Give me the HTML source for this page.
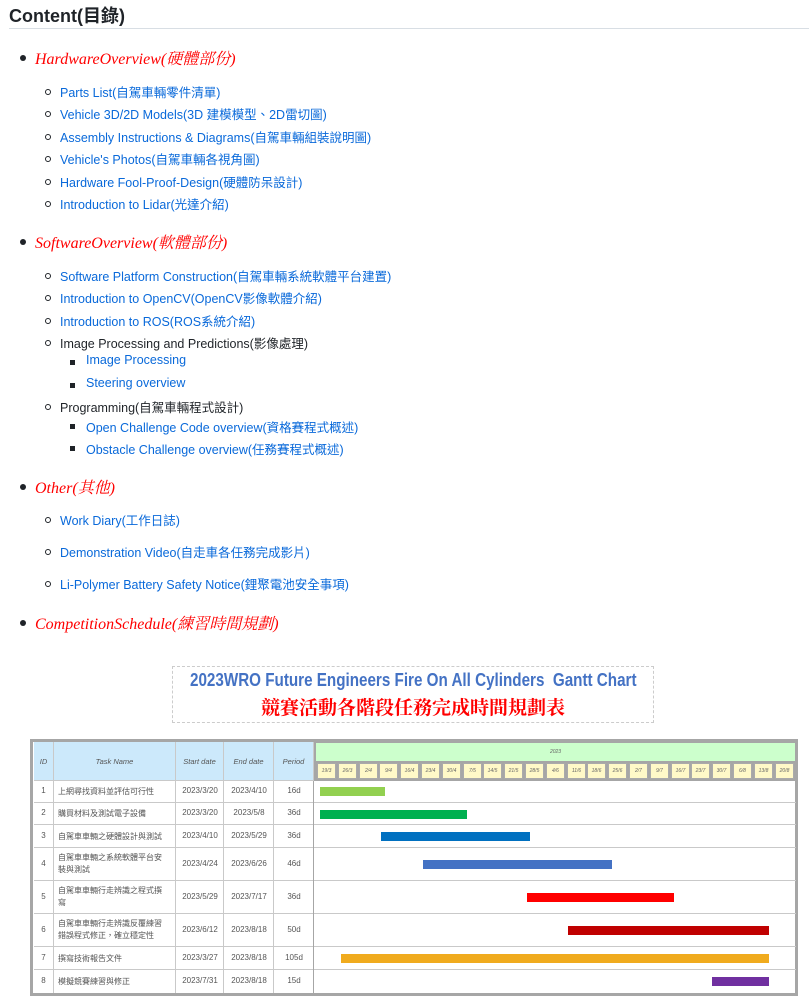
<!DOCTYPE html>
<html><head><meta charset="utf-8"><style>
*{margin:0;padding:0;box-sizing:border-box}
body{width:809px;height:1000px;background:#fff;position:relative;overflow:hidden;font-family:"Liberation Sans","Noto Sans CJK TC",sans-serif}
.a{position:absolute;white-space:nowrap}
h1{position:absolute;left:9px;top:2px;font-size:18px;font-weight:bold;color:#1f2328;font-family:"Liberation Sans","Noto Sans CJK TC",sans-serif}
.hr{position:absolute;left:9px;right:0;top:28px;height:1px;background:#d8dee4}
.m{font-family:"Liberation Serif","Noto Serif CJK SC",serif;font-style:italic;color:#f00;font-size:16px;left:35px}
.dot{position:absolute;width:6px;height:6px;border-radius:50%;background:#1f2328;left:20px}
.c{position:absolute;width:6px;height:6px;border-radius:50%;border:1px solid #1f2328;left:45px}
.s{position:absolute;width:5px;height:5px;background:#1f2328;left:70px}
.l{font-size:12.5px;color:#0969da;left:60px}
.k{font-size:12.5px;color:#1f2328;left:60px}
.l2{font-size:12.5px;color:#0969da;left:86px}
.cell{position:absolute;font-size:8px;color:#555;display:flex;align-items:center;justify-content:center;text-align:center;border-right:1px solid #c9c9c9}
.hd{font-style:italic;color:#555;font-size:7.5px}
.row{position:absolute;left:34px;width:762px;border-bottom:1px solid #c9c9c9}
.bar{position:absolute;height:9px}
.d{position:absolute;top:763px;width:19px;height:16px;background:#fff9c8;border:1px solid #aaa;font-size:5px;font-style:italic;color:#666;display:flex;align-items:center;justify-content:center}
</style></head><body>
<h1>Content(目錄)</h1><div class="hr"></div>

<div class="dot" style="top:55px"></div><div class="a m" style="top:46px">HardwareOverview(硬體部份)</div>
<div class="c" style="top:89px"></div><div class="a l" style="top:82px">Parts List(自駕車輛零件清單)</div>
<div class="c" style="top:111px"></div><div class="a l" style="top:104px">Vehicle 3D/2D Models(3D 建模模型、2D雷切圖)</div>
<div class="c" style="top:134px"></div><div class="a l" style="top:127px">Assembly Instructions &amp; Diagrams(自駕車輛組裝說明圖)</div>
<div class="c" style="top:156px"></div><div class="a l" style="top:149px">Vehicle's Photos(自駕車輛各視角圖)</div>
<div class="c" style="top:179px"></div><div class="a l" style="top:172px">Hardware Fool-Proof-Design(硬體防呆設計)</div>
<div class="c" style="top:201px"></div><div class="a l" style="top:194px">Introduction to Lidar(光達介紹)</div>

<div class="dot" style="top:239px"></div><div class="a m" style="top:230px">SoftwareOverview(軟體部份)</div>
<div class="c" style="top:273px"></div><div class="a l" style="top:266px">Software Platform Construction(自駕車輛系統軟體平台建置)</div>
<div class="c" style="top:295px"></div><div class="a l" style="top:288px">Introduction to OpenCV(OpenCV影像軟體介紹)</div>
<div class="c" style="top:318px"></div><div class="a l" style="top:311px">Introduction to ROS(ROS系統介紹)</div>
<div class="c" style="top:340px"></div><div class="a k" style="top:333px">Image Processing and Predictions(影像處理)</div>
<div class="s" style="top:360px"></div><div class="a l2" style="top:353px">Image Processing</div>
<div class="s" style="top:383px"></div><div class="a l2" style="top:376px">Steering overview</div>
<div class="c" style="top:404px"></div><div class="a k" style="top:397px">Programming(自駕車輛程式設計)</div>
<div class="s" style="top:424px"></div><div class="a l2" style="top:417px">Open Challenge Code overview(資格賽程式概述)</div>
<div class="s" style="top:446px"></div><div class="a l2" style="top:439px">Obstacle Challenge overview(任務賽程式概述)</div>

<div class="dot" style="top:484px"></div><div class="a m" style="top:475px">Other(其他)</div>
<div class="c" style="top:517px"></div><div class="a l" style="top:510px">Work Diary(工作日誌)</div>
<div class="c" style="top:549px"></div><div class="a l" style="top:542px">Demonstration Video(自走車各任務完成影片)</div>
<div class="c" style="top:581px"></div><div class="a l" style="top:574px">Li-Polymer Battery Safety Notice(鋰聚電池安全事項)</div>

<div class="dot" style="top:620px"></div><div class="a m" style="top:611px">CompetitionSchedule(練習時間規劃)</div>

<div class="a" style="left:172px;top:666px;width:482px;height:57px;border:1px dashed #ccc"></div>
<div class="a" style="left:190px;top:670px;font-family:'Liberation Sans',sans-serif;font-weight:bold;font-size:18px;color:#4472c4;transform-origin:0 0;transform:scaleX(0.845)">2023WRO Future Engineers Fire On All Cylinders&nbsp; Gantt Chart</div>
<div class="a" style="left:172px;top:693px;width:482px;text-align:center;font-family:'Liberation Serif','Noto Serif CJK SC',serif;font-weight:bold;font-size:19px;color:#f00">競賽活動各階段任務完成時間規劃表</div>

<div class="a" style="left:30px;top:739px;width:768px;height:257px;border:3px solid #a6a6a6;background:#fff"></div>
<div class="a" style="left:34px;top:742px;width:280px;height:39px;background:#cce9fb;border-bottom:1px solid #c9c9c9"></div>
<div class="cell hd" style="left:34px;top:742px;width:20px;height:39px">ID</div>
<div class="cell hd" style="left:54px;top:742px;width:122px;height:39px">Task Name</div>
<div class="cell hd" style="left:176px;top:742px;width:48px;height:39px">Start date</div>
<div class="cell hd" style="left:224px;top:742px;width:50px;height:39px">End date</div>
<div class="cell hd" style="left:274px;top:742px;width:40px;height:39px">Period</div>
<div class="a" style="left:314px;top:742px;width:482px;height:39px;background:#a6a6a6"></div>
<div class="a" style="left:316px;top:743px;width:479px;height:18px;background:#ccffcc;font-size:5px;font-style:italic;color:#666;text-align:center;line-height:18px">2023</div>
<div class="d" style="left:317px">19/3</div><div class="d" style="left:338px">26/3</div><div class="d" style="left:359px">2/4</div><div class="d" style="left:379px">9/4</div><div class="d" style="left:400px">16/4</div><div class="d" style="left:421px">23/4</div><div class="d" style="left:442px">30/4</div><div class="d" style="left:463px">7/5</div><div class="d" style="left:483px">14/5</div><div class="d" style="left:504px">21/5</div><div class="d" style="left:525px">28/5</div><div class="d" style="left:546px">4/6</div><div class="d" style="left:567px">11/6</div><div class="d" style="left:587px">18/6</div><div class="d" style="left:608px">25/6</div><div class="d" style="left:629px">2/7</div><div class="d" style="left:650px">9/7</div><div class="d" style="left:671px">16/7</div><div class="d" style="left:691px">23/7</div><div class="d" style="left:712px">30/7</div><div class="d" style="left:733px">6/8</div><div class="d" style="left:754px">13/8</div><div class="d" style="left:775px">20/8</div>

<div class="row" style="top:781px;height:22px"></div>
<div class="row" style="top:803px;height:22px"></div>
<div class="row" style="top:825px;height:23px"></div>
<div class="row" style="top:848px;height:33px"></div>
<div class="row" style="top:881px;height:33px"></div>
<div class="row" style="top:914px;height:33px"></div>
<div class="row" style="top:947px;height:23px"></div>
<div class="row" style="top:970px;height:23px;border-bottom:none"></div>
<div class="a" style="left:53px;top:781px;width:1px;height:212px;background:#c9c9c9"></div>
<div class="a" style="left:175px;top:781px;width:1px;height:212px;background:#c9c9c9"></div>
<div class="a" style="left:223px;top:781px;width:1px;height:212px;background:#c9c9c9"></div>
<div class="a" style="left:273px;top:781px;width:1px;height:212px;background:#c9c9c9"></div>
<div class="a" style="left:313px;top:781px;width:1px;height:212px;background:#a6a6a6"></div>

<div style="font-size:8px;color:#555">
<div class="a" style="left:34px;top:786px;width:19px;text-align:center">1</div><div class="a" style="left:58px;top:786px">上網尋找資料並評估可行性</div><div class="a" style="left:176px;top:786px;width:48px;text-align:center">2023/3/20</div><div class="a" style="left:224px;top:786px;width:50px;text-align:center">2023/4/10</div><div class="a" style="left:274px;top:786px;width:40px;text-align:center">16d</div>
<div class="a" style="left:34px;top:808px;width:19px;text-align:center">2</div><div class="a" style="left:58px;top:808px">購買材料及測試電子設備</div><div class="a" style="left:176px;top:808px;width:48px;text-align:center">2023/3/20</div><div class="a" style="left:224px;top:808px;width:50px;text-align:center">2023/5/8</div><div class="a" style="left:274px;top:808px;width:40px;text-align:center">36d</div>
<div class="a" style="left:34px;top:831px;width:19px;text-align:center">3</div><div class="a" style="left:58px;top:831px">自駕車車輛之硬體設計與測試</div><div class="a" style="left:176px;top:831px;width:48px;text-align:center">2023/4/10</div><div class="a" style="left:224px;top:831px;width:50px;text-align:center">2023/5/29</div><div class="a" style="left:274px;top:831px;width:40px;text-align:center">36d</div>
<div class="a" style="left:34px;top:859px;width:19px;text-align:center">4</div><div class="a" style="left:58px;top:852px;line-height:12px">自駕車車輛之系統軟體平台安<br>裝與測試</div><div class="a" style="left:176px;top:859px;width:48px;text-align:center">2023/4/24</div><div class="a" style="left:224px;top:859px;width:50px;text-align:center">2023/6/26</div><div class="a" style="left:274px;top:859px;width:40px;text-align:center">46d</div>
<div class="a" style="left:34px;top:892px;width:19px;text-align:center">5</div><div class="a" style="left:58px;top:885px;line-height:12px">自駕車車輛行走辨識之程式撰<br>寫</div><div class="a" style="left:176px;top:892px;width:48px;text-align:center">2023/5/29</div><div class="a" style="left:224px;top:892px;width:50px;text-align:center">2023/7/17</div><div class="a" style="left:274px;top:892px;width:40px;text-align:center">36d</div>
<div class="a" style="left:34px;top:925px;width:19px;text-align:center">6</div><div class="a" style="left:58px;top:918px;line-height:12px">自駕車車輛行走辨識反覆練習<br>錯誤程式修正，確立穩定性</div><div class="a" style="left:176px;top:925px;width:48px;text-align:center">2023/6/12</div><div class="a" style="left:224px;top:925px;width:50px;text-align:center">2023/8/18</div><div class="a" style="left:274px;top:925px;width:40px;text-align:center">50d</div>
<div class="a" style="left:34px;top:953px;width:19px;text-align:center">7</div><div class="a" style="left:58px;top:953px">撰寫技術報告文件</div><div class="a" style="left:176px;top:953px;width:48px;text-align:center">2023/3/27</div><div class="a" style="left:224px;top:953px;width:50px;text-align:center">2023/8/18</div><div class="a" style="left:274px;top:953px;width:40px;text-align:center">105d</div>
<div class="a" style="left:34px;top:976px;width:19px;text-align:center">8</div><div class="a" style="left:58px;top:976px">模擬競賽練習與修正</div><div class="a" style="left:176px;top:976px;width:48px;text-align:center">2023/7/31</div><div class="a" style="left:224px;top:976px;width:50px;text-align:center">2023/8/18</div><div class="a" style="left:274px;top:976px;width:40px;text-align:center">15d</div>
</div>

<div class="bar" style="left:320px;top:787px;width:65px;background:#92d050"></div>
<div class="bar" style="left:320px;top:810px;width:147px;background:#00b050"></div>
<div class="bar" style="left:381px;top:832px;width:149px;background:#0070c0"></div>
<div class="bar" style="left:423px;top:860px;width:189px;background:#4472c4"></div>
<div class="bar" style="left:527px;top:893px;width:147px;background:#ff0000"></div>
<div class="bar" style="left:568px;top:926px;width:201px;background:#c00000"></div>
<div class="bar" style="left:341px;top:954px;width:428px;background:#f0ab1e"></div>
<div class="bar" style="left:712px;top:977px;width:57px;background:#7030a0"></div>
</body></html>
